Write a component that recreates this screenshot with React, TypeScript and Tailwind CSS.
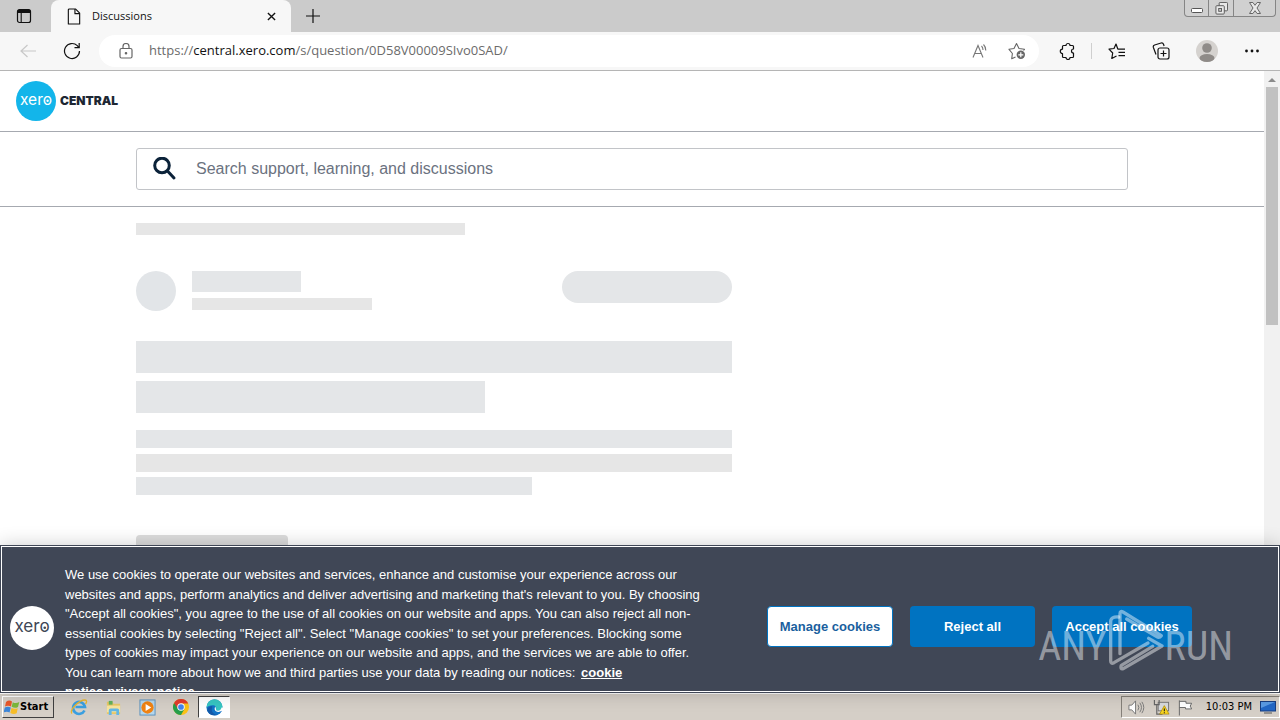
import React from "react";

function XeroMark({ className, disc, ink }: { className: string; disc: string; ink: string }) {
  return (
    <svg viewBox="0 0 40 40" className={className} role="img" aria-label="Xero">
      <circle cx="20" cy="20" r="20" fill={disc} />
      <text x="20" y="24" textAnchor="middle" fontFamily="Inter, 'Liberation Sans', sans-serif" fontSize="15.5" fontWeight="400" fill={ink}>
        xero
      </text>
      <circle cx="31.6" cy="19.800" r="1.200" fill={ink} />
    </svg>
  );
}

function TabStrip() {
  return (
    <div className="flex h-8 shrink-0 items-stretch justify-between bg-[#cbcbcb]">
      <div className="flex items-stretch">
        <button aria-label="Tab actions" className="flex w-[51px] items-center justify-center rounded-br-lg pr-1">
          <svg viewBox="0 0 16 16" className="h-4 w-4">
            <rect x="1.5" y="1.5" width="13" height="13" rx="2" fill="none" stroke="#111" strokeWidth="1.2" />
            <path d="M1.5 5V3.5a2 2 0 0 1 2-2h9a2 2 0 0 1 2 2V5z" fill="#111" />
            <path d="M5.2 5v9.5" stroke="#111" strokeWidth="1.1" />
          </svg>
        </button>
        <div className="flex w-[240px] items-center rounded-t-lg bg-[#f7f7f7] pr-3 pl-4">
          <svg viewBox="0 0 14 18" className="h-[17px] w-[14px]" fill="none" stroke="#111" strokeWidth="1.2" strokeLinejoin="round">
            <path d="M2 1h6.500l4.500 4.500V17H1V2a1 1 0 0 1 1-1z" />
            <path d="M8 1v5h5" />
          </svg>
          <span className="ml-[11px] flex-1 text-[11px] text-[#111]">Discussions</span>
          <button aria-label="Close tab" className="flex h-4 w-4 items-center justify-center">
            <svg viewBox="0 0 10 10" className="h-[9px] w-[9px]">
              <path d="M1 1l8 8M9 1L1 9" stroke="#111" strokeWidth="1.5" />
            </svg>
          </button>
        </div>
        <button aria-label="New tab" className="flex w-[44px] items-center justify-center">
          <svg viewBox="0 0 14 14" className="h-[14px] w-[14px]">
            <path d="M7 0v14M0 7h14" stroke="#111" strokeWidth="1.2" />
          </svg>
        </button>
      </div>
      <div className="mr-1 flex h-[17px] rounded-b border border-t-0 border-[#858585] bg-[#d0d0d0]">
        <button aria-label="Minimize" className="flex w-6 items-center justify-center border-r border-[#858585]">
          <svg viewBox="0 0 12 12" className="h-3 w-3">
            <rect x="0.5" y="6.5" width="11" height="4" rx="1" fill="#fff" stroke="#555" />
          </svg>
        </button>
        <button aria-label="Restore" className="flex w-[25px] items-center justify-center border-r border-[#858585]">
          <svg viewBox="0 0 14 14" className="h-[13px] w-[13px]" fill="#e8e8e8" stroke="#555">
            <rect x="4.5" y="0.5" width="9" height="9" rx="1" />
            <rect x="1" y="4" width="9" height="9" rx="1" />
            <rect x="4" y="7" width="3" height="3" fill="#ccc" />
          </svg>
        </button>
        <button aria-label="Close" className="flex w-[41px] items-center justify-center">
          <svg viewBox="0 0 12 12" className="h-3 w-3">
            <path d="M0.5 0.5h3.4L6 3.3 8.100.5h3.400L8 6l3.500 5.500H8.100L6 8.700 3.900 11.500H.5L4 6z" fill="#e8e8e8" stroke="#666" />
          </svg>
        </button>
      </div>
    </div>
  );
}

function Toolbar() {
  return (
    <div className="flex h-[39px] shrink-0 items-center border-b border-[#b5b5b5] bg-[#f7f7f7] pr-4 pl-5">
      <button aria-label="Back" className="mr-[27px]">
        <svg viewBox="0 0 16 14" className="h-[14px] w-4" fill="none" stroke="#c8c8c8" strokeWidth="1.2">
          <path d="M16 7H1M7.500 1L1 7l6.500 6" />
        </svg>
      </button>
      <button aria-label="Refresh" className="mr-[18px]">
        <svg viewBox="0 0 18 18" className="h-[18px] w-[18px]" fill="none" stroke="#111" strokeWidth="1.2">
          <path d="M16.500 9A7.500 7.500 0 1 1 14.300 3.700L16 5.500" />
          <path d="M16.200 1v4.700h-4.700" />
        </svg>
      </button>
      <div className="flex h-8 flex-1 items-center rounded-full bg-white pr-[13px] pl-5">
        <svg viewBox="0 0 14 16" className="h-4 w-[14px]" fill="none" stroke="#666" strokeWidth="1.2">
          <rect x="1" y="5.500" width="12" height="9.500" rx="1.500" />
          <path d="M4 5.500V3.500a3 3 0 0 1 6 0v2" />
          <circle cx="7" cy="10.300" r="0.700" fill="#666" />
        </svg>
        <input
          aria-label="Address and search bar"
          className="sr-only"
          readOnly
          tabIndex={-1}
          value="https://central.xero.com/s/question/0D58V00009SIvo0SAD/"
        />
        <span className="ml-4 flex-1 text-[13px] text-[#6b6b6b]">
          https://<span className="text-[#111]">central.xero.com</span>/s/question/0D58V00009SIvo0SAD/
        </span>
        <button aria-label="Read aloud" className="mr-5">
          <svg viewBox="0 0 16 16" className="h-4 w-4" fill="none" stroke="#777" strokeWidth="1.100">
            <path d="M1 14.500L6 2.500l5 12M2.800 10.500h6.500" />
            <path d="M9.500 3q1.500 1.500 1.500 4M11.500 1.500q2.300 2.300 2.300 6" />
          </svg>
        </button>
        <button aria-label="Add to favorites">
          <svg viewBox="0 0 18 18" className="h-[18px] w-[18px]" fill="none" stroke="#666" strokeWidth="1.100" strokeLinejoin="round">
            <path d="M7.500 15l-3.800 1.800.700-5.300L1 7.300l5-.8L8.500 1.500 11 6.500l5.500.8-1 1.200" />
            <circle cx="12.800" cy="12.800" r="4.200" fill="#666" stroke="none" />
            <path d="M12.800 10.300v5M10.300 12.800h5" stroke="#fff" strokeWidth="1.200" />
          </svg>
        </button>
      </div>
      <button aria-label="Extensions" className="ml-5">
        <svg viewBox="0 0 18 18" className="h-[18px] w-[18px]" fill="none" stroke="#111" strokeWidth="1.200" strokeLinejoin="round">
          <path d="M4.500 3.500H7a2 2 0 0 1 4 0h2.500a1 1 0 0 1 1 1V7a1.900 1.900 0 0 0 0 4v3.500a1 1 0 0 1-1 1H11a2 2 0 0 1-4 0H4.500a1 1 0 0 1-1-1V11.500a2.200 2.200 0 0 1 0-4.400V4.500a1 1 0 0 1 1-1z" />
        </svg>
      </button>
      <span className="mr-4 ml-[14px] h-4 w-px bg-[#cfcfcf]" />
      <button aria-label="Favorites" className="mr-[26px]">
        <svg viewBox="0 0 18 18" className="h-[18px] w-[18px]" fill="none" stroke="#111" strokeWidth="1.200" strokeLinejoin="round">
          <path d="M9.800 7L8 2 6 6.500l-5 .7 3.700 3.800L3.800 16.500 8.500 14" />
          <path d="M9.500 7.200h7.500M10.500 10.400h6.500M10.500 13.600h6.500" />
        </svg>
      </button>
      <button aria-label="Collections" className="mr-[26px]">
        <svg viewBox="0 0 18 18" className="h-[18px] w-[18px]" fill="none" stroke="#111" strokeWidth="1.200" strokeLinejoin="round">
          <rect x="6" y="6" width="11" height="11" rx="2" />
          <path d="M11.500 8.500v6M8.500 11.500h6" />
          <path d="M4 12.500L1.400 5.500a2 2 0 0 1 1.200-2.500l6.500-2a2 2 0 0 1 2.400 1.200l.6 1.800" />
        </svg>
      </button>
      <button aria-label="Profile" className="mr-[26px]">
        <svg viewBox="0 0 22 22" className="h-[22px] w-[22px]">
          <circle cx="11" cy="11" r="11" fill="#d5d2cf" />
          <circle cx="11" cy="8" r="4.800" fill="#8f8b88" />
          <ellipse cx="11" cy="18" rx="7.500" ry="4" fill="#8f8b88" />
        </svg>
      </button>
      <button aria-label="Settings and more" className="mr-1">
        <svg viewBox="0 0 16 4" className="h-1 w-4" fill="#111">
          <circle cx="2.500" cy="2" r="1.400" />
          <circle cx="8" cy="2" r="1.400" />
          <circle cx="13.500" cy="2" r="1.400" />
        </svg>
      </button>
    </div>
  );
}

function Skeleton() {
  return (
    <div className="ml-[136px] w-[596px] pt-4">
      <div className="h-3 w-[329px] bg-[#e6e6e6]" />
      <div className="mt-9 flex items-start">
        <div className="h-10 w-10 rounded-full bg-[#e2e5e8]" />
        <div className="ml-4 flex-1">
          <div className="h-[21px] w-[109px] bg-[#e4e6e8]" />
          <div className="mt-[6px] h-3 w-[180px] bg-[#e6e6e6]" />
        </div>
        <div className="h-8 w-[170px] rounded-full bg-[#e4e6e8]" />
      </div>
      <div className="mt-[30px] h-8 bg-[#e4e6e8]" />
      <div className="mt-2 h-8 w-[349px] bg-[#e4e6e8]" />
      <div className="mt-[17px] h-[18px] bg-[#e4e6e8]" />
      <div className="mt-[6px] h-[18px] bg-[#e6e6e6]" />
      <div className="mt-[5px] h-[18px] w-[396px] bg-[#e4e6e8]" />
      <div className="mt-10 h-8 w-[152px] rounded bg-[#dcdcdc]" />
    </div>
  );
}

function Watermark() {
  return (
    <div
      aria-hidden="true"
      className="pointer-events-none absolute top-[63px] right-[46px] flex items-end font-['Roboto_Condensed',Roboto,sans-serif] text-[40px] leading-none font-normal text-white/45"
    >
      <span className="pb-1">ANY</span>
      <svg viewBox="16 16 168 186" className="mx-px h-[62px] w-14" fill="none" stroke="currentColor" strokeWidth="10" strokeLinecap="round" strokeLinejoin="round">
        <path d="M52 150V30q0-10 9-5L176 96q-6 8-14 3L72 46" />
        <path d="M48 40Q24 38 24 54V172q0 10 10 5L136 118" />
        <path d="M138 104l40 23L62 195q-10 3-6-10L150 128" />
      </svg>
      <span className="pb-1">RUN</span>
    </div>
  );
}

function CookieBanner() {
  return (
    <section
      aria-label="Cookie notice"
      className="absolute inset-x-0 bottom-0 h-[148px] overflow-hidden border border-[#404756] bg-[#404756] font-['Liberation_Sans',Arial,sans-serif] shadow-[0_0_18px_rgba(0,0,0,0.2)]"
    >
      <div className="flex h-full border border-white pl-2">
        <XeroMark className="mt-[59px] h-11 w-11 shrink-0" disc="#ffffff" ink="#404756" />
        <p className="mt-[18px] ml-[11px] w-[660px] shrink-0 text-[13px] leading-normal whitespace-nowrap text-white">
          We use cookies to operate our websites and services, enhance and customise your experience across our
          <br />
          websites and apps, perform analytics and deliver advertising and marketing that's relevant to you. By choosing
          <br />
          "Accept all cookies", you agree to the use of all cookies on our website and apps. You can also reject all non-
          <br />
          essential cookies by selecting "Reject all". Select "Manage cookies" to set your preferences. Blocking some
          <br />
          types of cookies may impact your experience on our website and apps, and the services we are able to offer.
          <br />
          You can learn more about how we and third parties use your data by reading our notices:{" "}
          <a href="#cookie-notice" className="ml-[2px] font-bold underline">
            cookie
            <br />
            notice
          </a>
          <a href="#privacy-notice" className="ml-1 font-bold underline">
            privacy notice
          </a>
        </p>
        <div className="mt-[59px] ml-[42px] flex h-[41px] gap-[17px] text-[13px] font-bold">
          <button className="w-[126px] rounded-sm border border-[#0073c1] bg-white text-[#1a5f9e]">Manage cookies</button>
          <button className="w-[125px] rounded-sm bg-[#0073c1] text-white">Reject all</button>
          <button className="w-[140px] rounded-sm bg-[#0073c1] text-white">Accept all cookies</button>
        </div>
      </div>
      <Watermark />
    </section>
  );
}

function Taskbar() {
  return (
    <footer className="flex h-[27px] shrink-0 items-center border-t border-white bg-[#d5cfc7] pl-[2px] font-['DejaVu_Sans_Condensed',sans-serif]">
      <button className="flex h-[22px] w-[52px] items-center border border-t-white border-r-[#404040] border-b-[#404040] border-l-white pl-[1px] text-[11px] font-bold text-black">
        <svg viewBox="0 0 16 16" className="h-4 w-4 shrink-0">
          <path d="M2 3q3-2.500 6-.5L7 7.500Q4 6 1 7.500z" fill="#e8582a" />
          <path d="M8.800 3.200q3 1.800 6.500-.2L14 8q-3 1.800-6.400-.2z" fill="#7cb83c" />
          <path d="M.8 8.500q3-1.500 6 0L5.600 13.500q-3-1.500-6 0z" fill="#3d86d8" />
          <path d="M7.500 9q3 1.500 6.200.2l-1 5q-3 1.500-6.400-.2z" fill="#f6bd28" />
        </svg>
        Start
      </button>
      <nav aria-label="Pinned programs" className="ml-2 flex items-center">
        <button aria-label="Internet Explorer" className="flex w-[34px] justify-center">
          <svg viewBox="0 0 18 18" className="h-[18px] w-[18px]" fill="none">
            <path d="M14.500 12.500A6 6 0 1 1 15 9H5.500" stroke="#3a9fe0" strokeWidth="2.600" />
            <path d="M2 15.500C-1 12 9 2 15 2c2 0 2 2 .5 4" stroke="#e9b52c" strokeWidth="1.300" />
          </svg>
        </button>
        <button aria-label="File Explorer" className="flex w-[34px] justify-center">
          <svg viewBox="0 0 18 18" className="h-[17px] w-[17px]">
            <path d="M2 3h6l1 2h7v11H2z" fill="#e9c766" />
            <path d="M4 2h4v4H4z" fill="#62b35c" />
            <path d="M2 7h14v7H2z" fill="#f7e59e" />
            <path d="M4 17v-5q0-2 2-2h7q2 0 2 2v5h-3v-4H7v4z" fill="#63b7e5" />
          </svg>
        </button>
        <button aria-label="Media Player" className="flex w-[34px] justify-center">
          <svg viewBox="0 0 18 18" className="h-[17px] w-[17px]">
            <rect x="1" y="1" width="16" height="16" fill="#b5d7ed" stroke="#5a91bd" />
            <circle cx="9" cy="9" r="6.500" fill="#f08313" />
            <path d="M7 5.200v7.600L13 9z" fill="#fff" />
          </svg>
        </button>
        <button aria-label="Chrome" className="flex w-[34px] justify-center">
          <svg viewBox="0 0 18 18" className="h-4 w-4">
            <circle cx="9" cy="9" r="9" fill="#fbc116" />
            <path d="M9 9L1.200 4.500A9 9 0 0 0 9 18l4-7z" fill="#269e4b" />
            <path d="M9 5h8.100q-.2-.4-.3-.5A9 9 0 0 0 1.200 4.500L5.500 11z" fill="#e33b2e" />
            <circle cx="9" cy="9" r="4.200" fill="#fff" />
            <circle cx="9" cy="9" r="3.200" fill="#4384ee" />
          </svg>
        </button>
        <button
          aria-label="Microsoft Edge"
          className="flex h-[22px] w-8 items-center justify-center border border-t-[#404040] border-r-white border-b-white border-l-[#404040] bg-white"
        >
          <svg viewBox="0 0 18 18" className="h-[17px] w-[17px]">
            <circle cx="9" cy="9" r="8.500" fill="#1173c7" />
            <path d="M.5 9A8.500 8.500 0 0 1 17.500 8.500c0 3-2.500 4-4.500 4-2.500 0-3-1-2.400-2C11.500 8.500 10 6.500 7 6.500 4 6.500 1.500 7.500.5 9z" fill="#37c6c2" />
            <path d="M6.500 9q-2 6 5.500 8Q4 18.500 1.500 12.500q-.8-4 5-5z" fill="#1459a8" />
            <path d="M10 8q-2 3 .5 5 3 1.500 6.500-.5l1 2V9h-1.500q-1 3.500-4 3.500-2.500-.3-1.900-2z" fill="#fff" />
          </svg>
        </button>
      </nav>
      <div className="ml-auto flex h-[22px] items-center border border-t-[#858079] border-r-white border-b-white border-l-[#858079] pr-[3px] pl-[6px]">
        <svg viewBox="0 0 18 18" className="h-[17px] w-[17px]" fill="#fff" stroke="#777">
          <path d="M1 6.500h3l4-4.500v14l-4-4.500H1z" />
          <path d="M10.500 6q2 3 0 6M12.500 4q3.500 5 0 10M14.700 3q4 6 0 12" fill="none" />
        </svg>
        <svg viewBox="0 0 18 18" className="ml-2 h-[17px] w-[17px]">
          <rect x="5.500" y="3.500" width="11" height="9" fill="#d8dade" stroke="#777" />
          <path d="M1.500 1v5h5V1M4 6v10h6" fill="none" stroke="#666" strokeWidth="1.200" />
          <path d="M12 7l5 9H7z" fill="#f8d520" stroke="#a78300" strokeWidth=".7" />
          <path d="M12 10v3M12 14v1" stroke="#222" strokeWidth="1.200" />
        </svg>
        <svg viewBox="0 0 18 18" className="ml-[7px] h-[17px] w-[17px]" fill="#fff" stroke="#666">
          <path d="M2.500 1.500v16M2.500 2.500h7v2h6l-1.500 3 1.500 3h-6.500v-1.500H2.500" />
        </svg>
        <time className="ml-3 text-[11px] text-black">10:03 PM</time>
        <svg viewBox="0 0 16 14" className="ml-2 h-[14px] w-4">
          <rect x=".5" y="1.500" width="15" height="9.500" fill="#2367c5" stroke="#193e80" />
          <path d="M1 2h14L1 8z" fill="#5b9be4" />
          <path d="M4 13h8" stroke="#555" />
        </svg>
      </div>
    </footer>
  );
}

export default function App() {
  return (
    <div className="flex h-screen flex-col overflow-hidden bg-white font-['Open_Sans','Noto_Sans',sans-serif]">
      <TabStrip />
      <Toolbar />
      <div className="relative flex min-h-0 flex-1">
        <main className="min-w-0 flex-1 overflow-hidden bg-white">
          <header className="flex h-[61px] items-center border-b border-[#a6a9b0] pl-4">
            <a href="#home" className="flex items-center gap-1">
              <XeroMark className="h-10 w-10" disc="#13b5ea" ink="#ffffff" />
              <span className="font-['Inter',sans-serif] text-[12px] font-black text-[#1d2733]">CENTRAL</span>
            </a>
          </header>
          <div className="border-b border-[#a6a9b0] px-[136px] py-4">
            <label className="flex h-[42px] items-center rounded-[3px] border border-[#c2c4c8] pl-4">
              <svg viewBox="0 0 24 24" className="h-6 w-6 shrink-0" fill="none" stroke="#0b2239" strokeWidth="3" strokeLinecap="round">
                <circle cx="9" cy="8.500" r="7.300" />
                <path d="M14.500 14l6.500 7" />
              </svg>
              <input
                type="search"
                aria-label="Search"
                placeholder="Search support, learning, and discussions"
                className="ml-[19px] flex-1 bg-transparent font-['Liberation_Sans',Arial,sans-serif] text-[16px] outline-none placeholder:text-[#6b7280]"
              />
            </label>
          </div>
          <Skeleton />
        </main>
        <div className="flex w-4 shrink-0 flex-col items-center bg-[#f1f1f1]">
          <svg viewBox="0 0 16 16" className="h-4 w-4">
            <path d="M4 11l4-4 4 4z" fill="#8b8b8b" />
          </svg>
          <div className="h-[238px] w-3 bg-[#c1c1c1]" />
        </div>
        <CookieBanner />
      </div>
      <Taskbar />
    </div>
  );
}
